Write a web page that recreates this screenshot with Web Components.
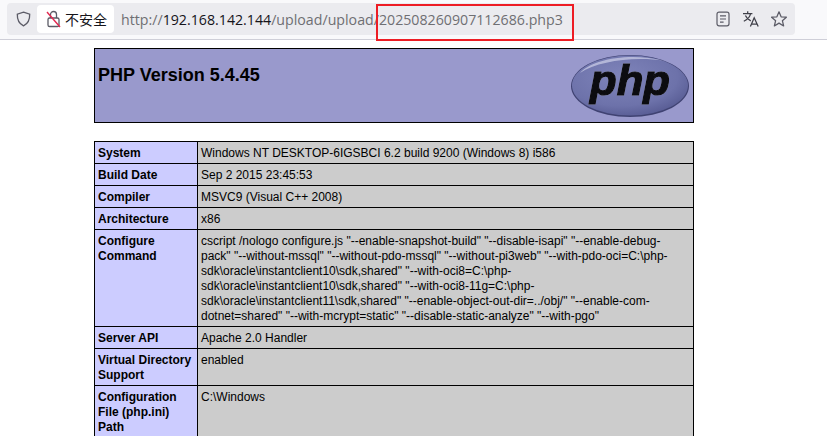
<!DOCTYPE html>
<html lang="zh">
<head>
<meta charset="utf-8">
<title>phpinfo</title>
<style>
  html, body { margin: 0; padding: 0; background: #fff; overflow: hidden; height: 436px; }
  body { font-family: "Liberation Sans", Arial, sans-serif; }
</style>
</head>
<body>

<template id="browser-bar-tpl">
  <style>
    :host { display: block; height: 40px; box-sizing: border-box; background: #f9f9fb; border-bottom: 1px solid #cfcfd8; padding: 3px 32px 0 7px; position: relative; font-family: "Open Sans", "Noto Sans CJK SC", sans-serif; }
    .field { height: 32px; background: #ebebef; border-radius: 4px; display: flex; align-items: center; padding-left: 9px; }
    .shield { width: 15px; height: 16px; flex: none; }
    .perm { display: flex; align-items: center; gap: 4px; height: 28px; width: 77px; box-sizing: border-box; margin-left: 6px; padding-left: 9px; background: #fff; border-radius: 4px; font: 14px "Noto Sans CJK SC", sans-serif; color: #15141a; flex: none; }
    .url { margin-left: 7px; flex: 1; font-size: 14.2px; color: #6f6f73; white-space: nowrap; }
    ::slotted(b) { font-weight: 400; color: #15141a; }
    .tools { display: flex; gap: 12px; margin-right: 8px; align-items: center; }
    .tools svg { width: 16px; height: 16px; display: block; }
    .mark { position: absolute; left: 376px; top: 4px; width: 198px; height: 37px; box-sizing: border-box; border: 2px solid #ed1c24; }
  </style>
  <div class="field">
    <svg class="shield" viewBox="0 0 16 17" fill="none" stroke="#5b5b66" stroke-width="1.4"><path d="M8 1.2 14.6 3.4C14.8 9.5 12.6 13.6 8 15.8 3.4 13.6 1.2 9.5 1.4 3.4Z"/></svg>
    <div class="perm">
      <svg width="15" height="18" viewBox="0 0 15 18" fill="none" style="flex:none"><path d="M4.5 8V4.5a3 3 0 0 1 6 0V8" stroke="#5b5b66" stroke-width="1.3"/><rect x="2" y="8" width="11" height="8.5" rx="1.6" stroke="#5b5b66" stroke-width="1.3"/><path d="M1 2 14 17" stroke="#e22850" stroke-width="1.4"/></svg>
      <span>不安全</span>
    </div>
    <div class="url"><slot></slot></div>
    <div class="tools">
      <svg viewBox="0 0 16 16" fill="none" stroke="#5b5b66" stroke-width="1.2"><rect x="2" y="1.2" width="12" height="13.6" rx="2"/><path d="M5 4.8h6M5 8h6M5 11.2h3.6"/></svg>
      <svg viewBox="0 0 16 16" fill="none" stroke="#3f3f48" stroke-width="1.25"><path d="M0 2.6h9.4M4.7 0.2v2.4M7.6 2.6C6.8 6.2 4 8.8 0.8 10.2M2.4 4.6C3.4 7 5.4 8.8 7.8 9.8M7.4 15.6l3.8-8.8 4 8.8M8.8 13h4.8"/></svg>
      <svg viewBox="0.4 0.4 15.2 15.2" fill="none" stroke="#5b5b66" stroke-width="1.2" stroke-linejoin="round"><path d="M8 1.2 10 5.9 15 6.3 11.2 9.6 12.4 14.6 8 11.9 3.6 14.6 4.8 9.6 1 6.3 6 5.9Z"/></svg>
    </div>
  </div>
  <div class="mark"></div>
</template>

<template id="php-header-tpl">
  <style>
    :host { display: flex; justify-content: space-between; box-sizing: border-box; width: 600px; height: 75px; margin: 8px 0 18px 94px; border: 1px solid #000; background: #9999cc; color: #000; padding: 4px 3px 0 3px; }
    h1 { margin: 10px 0 0; font: bold 18px/24px "Liberation Sans", Arial, sans-serif; }
    svg { width: 120px; height: 64px; flex: none; margin-top: 1px; }
  </style>
  <h1><slot></slot></h1>
  <svg viewBox="0 0 120 64">
    <defs>
      <radialGradient id="g" cx="42%" cy="35%" r="70%">
        <stop offset="0" stop-color="#7f84ba"/>
        <stop offset="0.7" stop-color="#6d72aa"/>
        <stop offset="1" stop-color="#565a92"/>
      </radialGradient>
    </defs>
    <ellipse cx="60" cy="32" rx="59" ry="31" fill="#3f4272"/>
    <ellipse cx="60" cy="31.5" rx="58" ry="30" fill="url(#g)"/>
    <path d="M10 19C22 5 60-2 95 7 65 2 28 7 10 19Z" fill="#c3c6e2" opacity=".8"/>
    <text x="60" y="41" text-anchor="middle" textLength="80" lengthAdjust="spacingAndGlyphs" font-family="Liberation Sans" font-weight="700" font-style="italic" font-size="42" fill="#0c0c10" stroke="#0c0c10" stroke-width="1.2" style="filter: drop-shadow(.7px .7px 0 #c5c7e2)">php</text>
  </svg>
</template>

<template id="info-table-tpl">
  <style>
    :host { display: block; box-sizing: border-box; width: 600px; margin-left: 94px; border-top: 1px solid #000; border-left: 1px solid #000; border-right: 1px solid #000; color: #000; font: 12px/15px "Liberation Sans", Arial, sans-serif; }
  </style>
  <slot></slot>
</template>

<template id="info-row-tpl">
  <style>
    :host { display: grid; grid-template-columns: 103px 1fr; border-bottom: 1px solid #000; }
    .e { background: #ccccff; font-weight: bold; padding: 4px 3px 2px; border-right: 1px solid #000; }
    .v { background: #cccccc; padding: 4px 9px 2px 3px; }
  </style>
  <div class="e"><slot name="e"></slot></div>
  <div class="v"><slot></slot></div>
</template>

<browser-bar>http://<b>192.168.142.144</b>/upload/upload/202508260907112686.php3</browser-bar>
<php-header>PHP Version 5.4.45</php-header>
<info-table>
  <info-row><span slot="e">System</span>Windows NT DESKTOP-6IGSBCI 6.2 build 9200 (Windows 8) i586</info-row>
  <info-row><span slot="e">Build Date</span>Sep 2 2015 23:45:53</info-row>
  <info-row><span slot="e">Compiler</span>MSVC9 (Visual C++ 2008)</info-row>
  <info-row><span slot="e">Architecture</span>x86</info-row>
  <info-row><span slot="e">Configure Command</span>cscript /nologo configure.js "--enable-snapshot-build" "--disable-isapi" "--enable-debug-pack" "--without-mssql" "--without-pdo-mssql" "--without-pi3web" "--with-pdo-oci=C:\php-sdk\oracle\instantclient10\sdk,shared" "--with-oci8=C:\php-sdk\oracle\instantclient10\sdk,shared" "--with-oci8-11g=C:\php-sdk\oracle\instantclient11\sdk,shared" "--enable-object-out-dir=../obj/" "--enable-com-dotnet=shared" "--with-mcrypt=static" "--disable-static-analyze" "--with-pgo"</info-row>
  <info-row><span slot="e">Server API</span>Apache 2.0 Handler</info-row>
  <info-row><span slot="e">Virtual Directory Support</span>enabled</info-row>
  <info-row><span slot="e">Configuration File (php.ini) Path</span>C:\Windows</info-row>
</info-table>

<script>
  function register(name) {
    const template = document.getElementById(name + '-tpl');
    customElements.define(name, class extends HTMLElement {
      constructor() {
        super();
        this.attachShadow({mode: 'open'}).appendChild(template.content.cloneNode(true));
      }
    });
  }

  ['browser-bar', 'php-header', 'info-table', 'info-row'].forEach(register);
</script>
</body>
</html>
